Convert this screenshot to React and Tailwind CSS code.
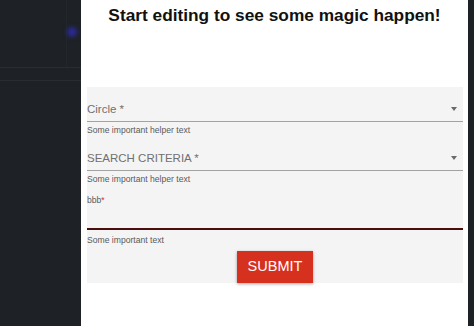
import { useState } from "react";

const FONT = { fontFamily: '"Liberation Sans", Arial, Helvetica, sans-serif' };

function SelectField({ label, helper }) {
  return (
    <div>
      <div className="flex items-center justify-between border-b border-[#a3a3a3] pb-[5px] pt-[15px]">
        <span className="text-[11.5px] leading-[14px] text-[#707070]">{label}</span>
        <span className="mr-[6px] h-0 w-0 border-x-[3.5px] border-t-[4px] border-x-transparent border-t-[#6a6a6a]" />
      </div>
      <p className="mt-[3px] text-[8.6px] leading-[11px] text-[#5a5a5a]">{helper}</p>
    </div>
  );
}

function TextField({ label, helper, value, onChange }) {
  return (
    <div className="mt-[10px]">
      <label className="block text-[8.6px] leading-[11px] text-[#5a5a5a]">
        {label}
        <span className="text-[#d32f2f]">*</span>
      </label>
      <input
        value={value}
        onChange={(e) => onChange(e.target.value)}
        className="block h-[24px] w-full border-b-2 border-[#4a0e0e] bg-transparent text-[11.5px] outline-none"
      />
      <p className="mt-[5px] text-[8.6px] leading-[11px] text-[#5a5a5a]">{helper}</p>
    </div>
  );
}

export default function App() {
  const [text, setText] = useState("");

  return (
    <div className="flex h-[326px] w-[474px] overflow-hidden bg-white" style={FONT}>
      {/* editor side */}
      <div className="relative w-[81px] shrink-0 bg-[#1e2126]">
        <div className="mr-[14px] h-[67px] border-r border-[#23262b]" />
        <div className="h-[14px] border-y border-[#292c32]" />
        <div className="absolute left-[67px] top-[27px] h-[10px] w-[10px] rounded-full bg-[#2a2a96] blur-[2px]" />
      </div>

      {/* preview */}
      <div className="w-[387px] shrink-0 bg-white">
        <h1 className="mt-[5px] text-center text-[17.3px] font-bold leading-[21px] text-[#111]">
          Start editing to see some magic happen!
        </h1>

        <form
          className="ml-[6px] mt-[61px] w-[376px] bg-[#f4f4f4]"
          onSubmit={(e) => e.preventDefault()}
        >
          <SelectField label="Circle *" helper="Some important helper text" />
          <SelectField label="SEARCH CRITERIA *" helper="Some important helper text" />
          <TextField label="bbb" helper="Some important text" value={text} onChange={setText} />
          <div className="mt-[5px] flex justify-center">
            <button
              type="submit"
              className="h-[32px] w-[76px] bg-[#d6301f] text-[14.5px] text-white shadow-[0_1px_3px_rgba(0,0,0,0.35)]"
            >
              SUBMIT
            </button>
          </div>
        </form>
      </div>

      <div className="flex-1 bg-[#1e2126]" />
    </div>
  );
}
